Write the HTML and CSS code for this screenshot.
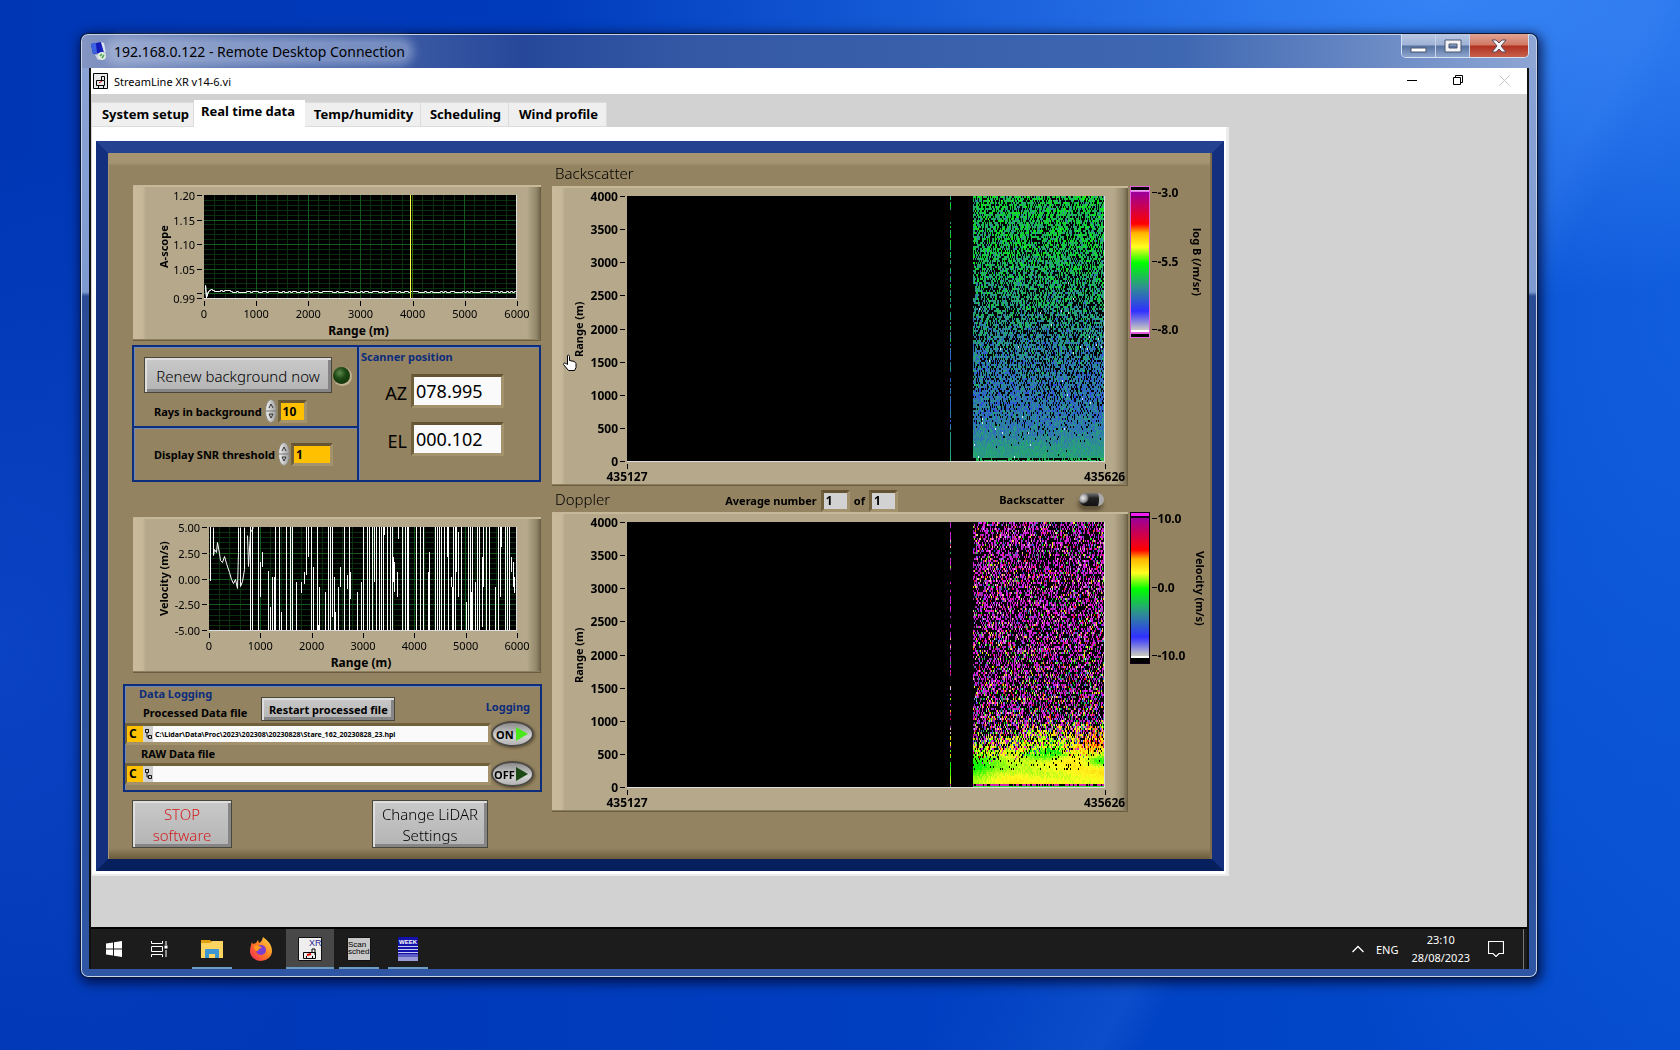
FILE: index.html
```html
<!DOCTYPE html>
<html lang="en">
<head>
<meta charset="UTF-8">
<title>192.168.0.122 - Remote Desktop Connection</title>
<link rel="stylesheet" href="styles.css">
</head>
<body>
<div class="window">
  <div class="titlebar">
    <svg class="rdp-icon" width="18" height="20" viewBox="0 0 18 20">
      <path d="M1 3l10-2 3 10-11 2z" fill="#1018b8"/>
      <path d="M1 3l5-1 1 10-4 1z" fill="#3b62e0"/>
      <path d="M11 1l3 1 2 10-2-1z" fill="#dfe6f2"/>
      <path d="M5 14l9-2 2 4-8 3z" fill="#cfd6e2"/>
      <circle cx="12" cy="15" r="4" fill="#dfeedd"/>
      <path d="M10 15l2-2m0 4l2-3" stroke="#3c9a3c" stroke-width="1.4"/>
    </svg>
    <span class="title">192.168.0.122 - Remote Desktop Connection</span>
    <div class="caption-buttons">
      <button class="min" aria-label="Minimize"><svg width="18" height="6"><rect x="1" y="1" width="15" height="4" fill="#fff" stroke="#4a5470"/></svg></button>
      <button class="max" aria-label="Maximize"><svg width="18" height="14"><path d="M1 1h16v12H1z M5 5v4h8V5z" fill="#f4f4f6" fill-rule="evenodd" stroke="#4a5470"/></svg></button>
      <button class="close" aria-label="Close"><svg width="16" height="14"><path d="M1 1h4l3 3 3-3h4l-5 6 5 6h-4l-3-3-3 3H1l5-6z" fill="#f6f6f8" stroke="#5a4a5c"/></svg></button>
    </div>
  </div>

  <div class="screen">
    <div class="app-title">
      <svg width="15" height="16" viewBox="0 0 15 16"><path d="M.5.5h14v15H.5z" fill="#e8e8e8" stroke="#000"/><path d="M3.500 7.500h8v5h-8zM5.500 12v3M10.500 12v3M8.500 7V3.500h3V7" fill="none" stroke="#000"/><path d="M6 10l3-2" stroke="#c00"/></svg>
      <span>StreamLine XR v14-6.vi</span>
      <div class="app-buttons">
        <button aria-label="Minimize"><svg width="11" height="11"><path d="M0 5.500h10" stroke="#000"/></svg></button>
        <button aria-label="Restore"><svg width="11" height="11"><path d="M.5 2.500h7v7h-7zM2.500 2.500v-2h7v7h-2" fill="none" stroke="#000"/></svg></button>
        <button aria-label="Close" disabled><svg width="11" height="11"><path d="M.5.5l10 10M10.500.5l-10 10" stroke="#c4c4c4"/></svg></button>
      </div>
    </div>

    <div class="client">
      <div class="tabs" role="tablist">
        <button role="tab" class="tab t1">System setup</button>
        <button role="tab" class="tab t2 active">Real time data</button>
        <button role="tab" class="tab t3">Temp/humidity</button>
        <button role="tab" class="tab t4">Scheduling</button>
        <button role="tab" class="tab t5">Wind profile</button>
      </div>

      <div class="page">
        <div class="panel">
          <div class="left">
            <!-- A-scope -->
            <div class="graph small">
              <div class="y-title">A-scope</div>
              <ul class="y-axis ascope-axis"><li>1.20</li><li>1.15</li><li>1.10</li><li>1.05</li><li>0.99</li></ul>
              <canvas id="ascope"></canvas>
              <ul class="x-axis"><li>0</li><li>1000</li><li>2000</li><li>3000</li><li>4000</li><li>5000</li><li>6000</li></ul>
              <div class="x-title">Range (m)</div>
            </div>

            <div class="groups">
              <div class="group renew">
                <div class="row">
                  <button class="btn big">Renew background now</button>
                  <span class="led"></span>
                </div>
                <div class="row num">
                  <label for="rays">Rays in background</label>
                  <svg class="spin" width="12" height="24"><ellipse cx="6" cy="12" rx="5.500" ry="11.500" fill="url(#silver)" stroke="#8b8778"/><path d="M1 12h10" stroke="#777"/><path d="M4 9l2-4 2 4M4 15h4l-2 4z" fill="none" stroke="#333"/></svg>
                  <input id="rays" class="yellow w1" type="text" value="10">
                </div>
              </div>
              <div class="group scanner">
                <div class="group-title">Scanner position</div>
                <div class="pos"><label for="az">AZ</label><input id="az" type="text" value="078.995" readonly></div>
                <div class="pos"><label for="el">EL</label><input id="el" type="text" value="000.102" readonly></div>
              </div>
              <div class="group snr">
                <div class="row num">
                  <label for="snr">Display SNR threshold</label>
                  <svg class="spin" width="12" height="24"><ellipse cx="6" cy="12" rx="5.500" ry="11.500" fill="url(#silver)" stroke="#8b8778"/><path d="M1 12h10" stroke="#777"/><path d="M4 9l2-4 2 4M4 15h4l-2 4z" fill="none" stroke="#333"/></svg>
                  <input id="snr" class="yellow w2" type="text" value="1">
                </div>
              </div>
            </div>

            <!-- velocity -->
            <div class="graph small velocity">
              <div class="y-title">Velocity (m/s)</div>
              <ul class="y-axis"><li>5.00</li><li>2.50</li><li>0.00</li><li>-2.50</li><li>-5.00</li></ul>
              <canvas id="velocity"></canvas>
              <ul class="x-axis"><li>0</li><li>1000</li><li>2000</li><li>3000</li><li>4000</li><li>5000</li><li>6000</li></ul>
              <div class="x-title">Range (m)</div>
            </div>

            <div class="group logging">
              <div class="log-head">
                <div>
                  <div class="group-title">Data Logging</div>
                  <label for="proc">Processed Data file</label>
                </div>
                <button class="btn restart">Restart processed file</button>
                <span class="log-label">Logging</span>
              </div>
              <div class="file-row">
                <div class="path">
                  <span class="drive">C</span>
                  <svg width="10" height="16"><path d="M2.500 3.500h3v3h-3zM5.500 9.500h3v3h-3zM4 6.500V11h1.500" fill="none" stroke="#111"/></svg>
                  <input id="proc" type="text" value="C:\Lidar\Data\Proc\2023\202308\20230828\Stare_162_20230828_23.hpl">
                </div>
                <button class="toggle on">ON</button>
              </div>
              <label class="raw-label" for="raw">RAW Data file</label>
              <div class="file-row">
                <div class="path">
                  <span class="drive">C</span>
                  <svg width="10" height="16"><path d="M2.500 3.500h3v3h-3zM5.500 9.500h3v3h-3zM4 6.500V11h1.500" fill="none" stroke="#111"/></svg>
                  <input id="raw" type="text" value="">
                </div>
                <button class="toggle off">OFF</button>
              </div>
            </div>

            <div class="actions">
              <button class="btn big stop">STOP<br>software</button>
              <button class="btn big change">Change LiDAR<br>Settings</button>
            </div>
          </div>

          <div class="right">
            <div class="map-title top">Backscatter</div>
            <div class="map-row">
              <div class="graph large">
                <div class="y-title">Range (m)</div>
                <ul class="y-axis"><li>4000</li><li>3500</li><li>3000</li><li>2500</li><li>2000</li><li>1500</li><li>1000</li><li>500</li><li>0</li></ul>
                <canvas id="backscatter"></canvas>
                <ul class="x-axis"><li>435127</li><li>435626</li></ul>
              </div>
              <div class="scale pink">
                <div class="ramp"></div>
                <ul><li>-3.0</li><li>-5.5</li><li>-8.0</li></ul>
                <div class="scale-title">log B (/m/sr)</div>
              </div>
            </div>
            <div class="map-title mid">
              <span>Doppler</span>
              <div class="average">
                <label for="avg">Average number</label>
                <input id="avg" type="text" value="1" readonly>
                <label for="avg-of">of</label>
                <input id="avg-of" type="text" value="1" readonly>
              </div>
              <label class="switch-label" for="mode">Backscatter</label>
              <input id="mode" class="switch" type="checkbox">
            </div>
            <div class="map-row">
              <div class="graph large">
                <div class="y-title">Range (m)</div>
                <ul class="y-axis"><li>4000</li><li>3500</li><li>3000</li><li>2500</li><li>2000</li><li>1500</li><li>1000</li><li>500</li><li>0</li></ul>
                <canvas id="doppler"></canvas>
                <ul class="x-axis"><li>435127</li><li>435626</li></ul>
              </div>
              <div class="scale">
                <div class="ramp"></div>
                <ul><li>10.0</li><li>0.0</li><li>-10.0</li></ul>
                <div class="scale-title">Velocity (m/s)</div>
              </div>
            </div>
          </div>

          <svg class="hand" width="16" height="18"><path d="M5.500 1.500c1-1 2 0 2 1v4l5 1 1.500 2v4l-1.500 3h-6l-5-6c0-2 2-1.500 4 0z" fill="#fff" stroke="#000"/></svg>
        </div>
      </div>
    </div>

    <div class="taskbar">
      <button class="task" aria-label="Start"><svg width="16" height="16"><path d="M0 2.500l7-1v6H0zM8 1.300L16 0v7.500H8zM0 8.500h7v6l-7-1zM8 8.500h8V16l-8-1.200z" fill="#fff"/></svg></button>
      <button class="task" aria-label="Task view"><svg width="17" height="16"><path d="M.5 0v2.500h11V0M.5 16v-2.500h11V16M.5 5.500h11v5H.5zM15 0v4M15 9v7" fill="none" stroke="#fff"/><path d="M13.500 4.500h3v3h-3z" fill="#fff"/></svg></button>
      <button class="task run files" aria-label="File Explorer"><svg width="22" height="20"><path d="M0 1h9l2 2v3H0z" fill="#e0a010"/><path d="M0 4h9l2-2h11v17H0z" fill="#fcd462"/><path d="M4 11q0-1 1-1h12q1 0 1 1v8h-4v-4H8v4H4z" fill="#3c96d2"/></svg></button>
      <button class="task" aria-label="Firefox"><svg width="24" height="24"><defs><linearGradient id="fox" x1="1" y1="0" x2="0" y2="1"><stop offset="0" stop-color="#ffe64a"/><stop offset=".5" stop-color="#ff7a22"/><stop offset="1" stop-color="#f0245c"/></linearGradient></defs><path d="M3 5l1 2 3-1 2-3 1 3c2-1 3-2 4-6 4 3 9 7 9 14a11 10 0 0 1-22 0C1 11 2 8 3 5z" fill="url(#fox)"/><circle cx="12" cy="13" r="5" fill="#7a3fd0"/><path d="M5 9c4-1 6 0 8 2-2 0-4 1-4 3-3 0-4-2-4-5z" fill="#ff9a20"/></svg></button>
      <button class="task run current" aria-label="StreamLine XR"><svg width="24" height="24"><path d="M.5.5h23v23H.5z" fill="#eee" stroke="#111"/><text x="11" y="9" class="tile-xr">XR</text><path d="M5.500 15.500h12v6h-12zM8.500 22v-3M14.500 22v-3M14 15v-3h3v6" fill="none" stroke="#000"/><path d="M9 18l4-1" stroke="#d00" stroke-width="2"/></svg></button>
      <button class="task run" aria-label="Scan sched"><svg width="24" height="24"><path d="M.5.5h23v23H.5z" fill="#c8c8c8" stroke="#111"/><text x="1" y="10" class="tile-text">Scan</text><text x="1" y="17" class="tile-text">sched</text></svg></button>
      <button class="task run" aria-label="Week"><svg width="20" height="24"><path d="M0 0h20v24H0z" fill="#1212a8"/><text x="1" y="7" class="tile-week">WEEK</text><path d="M0 9.500h20M0 12.500h20M0 15.500h20" stroke="#c8ccf0"/><path d="M0 17h20v3H0z" fill="#5d5dc4"/><path d="M0 20h20v4H0z" fill="#9a9ad8"/></svg></button>
      <div class="tray">
        <svg class="chevron" width="12" height="8"><path d="M.5 7L6 1.500 11.500 7" fill="none" stroke="#fff" stroke-width="1.300"/></svg>
        <span class="lang">ENG</span>
        <div class="clock">23:10<br>28/08/2023</div>
        <svg width="16" height="16"><path d="M.5.5h15v12H11L8 15.500 5 12.500H.5z" fill="none" stroke="#fff" stroke-width="1.200"/></svg>
      </div>
    </div>
  </div>
</div>

<svg width="0" height="0" class="defs"><defs><linearGradient id="silver"><stop offset="0" stop-color="#f4f4f4"/><stop offset="1" stop-color="#9a9a9a"/></linearGradient></defs></svg>
<script src="plots.js"></script>
</body>
</html>
```

FILE: styles.css
```css
* {
  box-sizing: border-box;
}
body {
  margin: 0;
  min-height: 100vh;
  display: flex;
  padding: 34px 143px 73px 81px;
  font-family: "Noto Sans", "Open Sans", sans-serif;
  font-size: 11px;
  color: #000;
  background:
    linear-gradient(118deg, transparent 66%, rgba(90, 160, 255, 0.12) 74%, transparent 76%),
    radial-gradient(ellipse 900px 300px at 86% 0, #3583f5, transparent),
    radial-gradient(ellipse 500px 900px at 100% 30%, rgba(20, 98, 226, 0.8), transparent),
    radial-gradient(ellipse 400px 500px at 0 62%, rgba(20, 80, 210, 0.5), transparent),
    linear-gradient(90deg, #0036b4, #0040c2 60%, #044cce);
}
button, input {
  font: inherit;
  color: inherit;
  margin: 0;
  padding: 0;
  border: 0;
}
ul {
  list-style: none;
  margin: 0;
  padding: 0;
}
svg {
  display: block;
  flex: none;
}
canvas {
  display: block;
  width: 100%;
  height: 100%;
}
.defs {
  position: absolute;
}

/* remote desktop window */
.window {
  flex: 1;
  min-width: 0;
  display: flex;
  flex-direction: column;
  padding: 0 8px 8px;
  border-radius: 7px;
  background:
    linear-gradient(90deg, #8495c2 0, #5872b0 160px, #27489a 440px, #3458a4 600px, #3f68b2 1100px, #8ea6d4 100%) top / 100% 34px no-repeat,
    linear-gradient(#8ca4d6 0, #7d9ad0 258px, #2a4c94 262px, #2f56a4 100%);
  box-shadow: inset 0 0 0 1px #c4d2ea, 0 0 0 1px #0a1838, 2px 3px 12px 3px rgba(0, 0, 30, 0.7);
}
.titlebar {
  height: 34px;
  display: flex;
  align-items: center;
  padding-left: 1px;
}
.title {
  font-size: 14px;
  margin: 0 auto 0 2px;
  padding: 0 4px;
  border-radius: 10px;
  background: rgba(200, 212, 236, 0.4);
  box-shadow: 0 0 8px 5px rgba(200, 212, 236, 0.4);
}
.caption-buttons {
  align-self: flex-start;
  display: flex;
  height: 24px;
  border: 1px solid #d5e0f2;
  border-top: 0;
  border-radius: 0 0 5px 5px;
  overflow: hidden;
}
.caption-buttons button {
  display: flex;
  align-items: center;
  justify-content: center;
  width: 34px;
  background: linear-gradient(#b9c8e2, #9fb2d6 48%, #56729f 52%, #8ea6cf);
  border-right: 1px solid #c6d2e8;
}
.caption-buttons .min {
  padding-top: 8px;
}
.caption-buttons .close {
  width: 58px;
  background: linear-gradient(#e0a394, #d07763 48%, #b03020 52%, #c8604c);
  border-right: 0;
}

.screen {
  flex: 1;
  display: flex;
  flex-direction: column;
  background: #0b0b0b;
  border: 0 solid #111;
  border-width: 0 2px;
}
.app-title {
  height: 26px;
  display: flex;
  align-items: center;
  background: #fff;
  padding-left: 2px;
}
.app-title span {
  margin: 0 auto 0 6px;
}
.app-buttons {
  display: flex;
  gap: 35px;
  padding: 0 17px 2px 0;
}
.app-buttons button {
  background: none;
}

.client {
  flex: 1;
  padding: 6px 0 0 1px;
  background: #d2d2d2;
}
.tabs {
  display: flex;
  align-items: flex-end;
  height: 27px;
}
.tab {
  height: 25px;
  padding: 0 0 2px 2px;
  background: #efefef;
  border: 1px solid #dcdcdc;
  border-left: 0;
  font-size: 13px;
  font-weight: bold;
  line-height: 18px;
  white-space: nowrap;
}
.tab.active {
  height: 27px;
  background: #fff;
  border-color: #fff;
  padding: 0 2px 5px 0;
}
.t1 { width: 102px; padding-left: 6px; }
.t2 { width: 111px; }
.t3 { width: 116px; }
.t4 { width: 88px; }
.t5 { width: 98px; }

.page {
  width: 79.2%;
  min-width: 1100px;
  padding: 14px 2px 3px 4px;
  background: #fff;
  border: 0 solid #ececec;
  border-width: 0 3px 2px 0;
}
.panel {
  position: relative;
  display: flex;
  gap: 9px;
  padding: 0 0 0 15px;
  border: 12px solid;
  border-color: #24428f #142f7e #05205c #142f7e;
  background:
    linear-gradient(#a89672, #a59370 10px, #938361 13px) top / 100% 13px no-repeat,
    linear-gradient(#938361, #6c5c3c) bottom / 100% 11px no-repeat,
    #938361;
  box-shadow: inset 1px 0 #a49674, inset -2px 0 #7b6c4c;
}
.hand {
  position: absolute;
  left: 454px;
  top: 201px;
}

.left {
  flex: none;
  width: 420px;
  padding: 32px 2px 11px 10px;
}

/* graphs */
.graph {
  display: grid;
  background:
    linear-gradient(90deg, #c9bb9c, #c5b798 10px, transparent 13px),
    linear-gradient(270deg, #6a6048, #94896c 5px, transparent 14px),
    #b5a88b;
  box-shadow: inset 0 2px #c6b999, inset -1px -1px #6b5d40, inset 0 -2px #8c7f60;
}
.graph canvas {
  grid-area: plot;
  border-right: 1px solid #ddd;
  border-bottom: 1px solid #ddd;
  min-width: 0;
  background: #000;
}
.y-title {
  grid-area: ytitle;
  writing-mode: vertical-rl;
  transform: rotate(180deg);
  text-align: center;
  font-weight: bold;
  line-height: 18px;
  white-space: nowrap;
}
.y-axis {
  grid-area: yaxis;
  display: flex;
  flex-direction: column;
  justify-content: space-between;
  margin: -7px 0 -8px;
  text-align: right;
}
.y-axis li {
  position: relative;
  height: 16px;
  line-height: 16px;
  padding-right: 9px;
}
.y-axis li::after, .ascope-axis li:last-child::before {
  content: "";
  position: absolute;
  right: 2px;
  top: 7px;
  width: 5px;
  height: 1px;
  background: #000;
}
.ascope-axis li:last-child {
  margin-top: 5px;
}
.ascope-axis li:last-child::before {
  top: 2px;
}
.x-axis {
  grid-area: xaxis;
  display: flex;
  justify-content: space-between;
  margin: 0 -24px;
}
.x-axis li {
  position: relative;
  width: 48px;
  padding-top: 7px;
  line-height: 16px;
  text-align: center;
}
.x-axis li::before {
  content: "";
  position: absolute;
  left: 24px;
  top: 2px;
  width: 1px;
  height: 5px;
  background: #000;
}
.x-title {
  grid-area: xtitle;
  text-align: center;
  font-weight: bold;
  line-height: 16px;
  padding-right: 4px;
}
.graph.small {
  height: 156px;
  padding: 10px 24px 0 22px;
  grid-template: "ytitle yaxis plot" 104px "blank blank xaxis" 24px ". . xtitle" 16px / 18px 31px 1fr;
}
.graph.velocity {
  grid-template-columns: 18px 36px 1fr;
}
.small .x-title {
  font-size: 12px;
}
.graph.large {
  flex: 1;
  min-width: 0;
  height: 300px;
  padding: 10px 23px 0 18px;
  font-size: 12px;
  font-weight: bold;
  grid-template: "ytitle yaxis plot" 266px ". . xaxis" 24px / 18px 39px 1fr;
}
.large .y-title {
  font-size: 11px;
}

/* control groups */
.groups {
  display: grid;
  grid-template: 83px 54px / 227px 1fr;
  margin: 4px 0 35px -1px;
}
.group {
  border: 2px solid #0c2c7c;
  box-shadow: inset 1px 1px #7088bb;
}
.scanner {
  grid-row: span 2;
  border-left: 0;
}
.snr {
  border-top: 0;
  padding: 14px 0 0 20px;
}
.renew {
  padding: 10px 0 0 10px;
}
.row {
  display: flex;
  align-items: center;
}
.btn {
  border: 1px solid #4b463a;
  background: linear-gradient(#c9c9c9, #b4b4b4);
  box-shadow: inset 2px 2px #dedede, inset -3px -3px #858585;
}
.big {
  font-size: 15px;
  font-weight: 300;
}
.renew .btn {
  width: 188px;
  height: 36px;
  padding-top: 2px;
  white-space: nowrap;
}
.led {
  width: 17px;
  height: 17px;
  margin-left: 1px;
  border-radius: 50%;
  background: radial-gradient(circle at 40% 35%, #5d8a4c, #1c4714 40%, #0c2a06);
  box-shadow: 1px 1px 1px 1px #c3b493;
}
.num {
  font-weight: bold;
}
.renew .num {
  margin: 6px 0 0 10px;
}
.spin {
  margin: 0 1px 0 3px;
}
.yellow, .pos input, .average input {
  border: 3px solid;
  border-color: #655431 #a3926c #a3926c #70603c;
}
.yellow {
  height: 23px;
  padding-left: 2px;
  background: #ffc000;
  font-size: 12px;
  font-weight: bold;
}
.w1 { width: 29px; }
.w2 { width: 42px; }
.group-title, .log-label {
  color: #0c2c7c;
  font-weight: bold;
  line-height: 16px;
}
.group-title {
  padding: 2px 0 0 2px;
}
.pos {
  display: flex;
  align-items: center;
  justify-content: flex-end;
  gap: 4px;
  height: 34px;
  margin: 9px 35px 14px 0;
  font-size: 18px;
}
.pos label {
  padding-top: 4px;
}
.pos input {
  width: 93px;
  height: 34px;
  padding-left: 2px;
  background: #fafafa;
}

/* data logging */
.logging {
  height: 108px;
  margin: 11px 0 8px -10px;
  width: 419px;
}
.log-head {
  display: flex;
  height: 37px;
}
.log-head .group-title {
  padding: 1px 0 0 14px;
  line-height: 14px;
}
.log-head label {
  display: block;
  padding: 3px 0 0 18px;
  line-height: 18px;
  font-weight: bold;
}
.restart {
  width: 134px;
  height: 24px;
  margin: 11px 0 0 14px;
  font-weight: bold;
  white-space: nowrap;
}
.log-label {
  margin: 13px 10px 0 auto;
}
.file-row {
  display: flex;
  align-items: center;
  height: 22px;
  padding-right: 6px;
}
.path {
  flex: 1;
  display: flex;
  height: 22px;
  border: 3px solid;
  border-color: #70603c #a3926c #a3926c #70603c;
  border-left-width: 2px;
}
.drive {
  width: 16px;
  padding-left: 2px;
  background: #ffc000;
  font-size: 12px;
  font-weight: bold;
  line-height: 16px;
}
.path svg {
  background: #d0d0d0;
}
.path input {
  flex: 1;
  min-width: 0;
  padding: 0 2px;
  background: #fafafa;
  font-size: 7px;
  font-weight: bold;
}
.raw-label {
  display: block;
  padding: 0 0 1px 16px;
  line-height: 17px;
  font-weight: bold;
}
.toggle {
  display: flex;
  align-items: center;
  gap: 2px;
  width: 43px;
  height: 26px;
  padding-left: 3px;
  border: 2px solid #4d4a44;
  border-radius: 50%;
  background: linear-gradient(#8b8b8b, #d2d2d2 60%, #b2b2b2);
  box-shadow: 1px 1px 3px #5b4d30;
  font-weight: bold;
}
.toggle::after {
  content: "";
  flex: none;
  border-left: 12px solid #4be81e;
  border-top: 7px solid transparent;
  border-bottom: 7px solid transparent;
}
.toggle.off {
  padding-left: 1px;
  gap: 1px;
}
.toggle.off::after {
  border-left-color: #1c4a14;
}
.actions {
  display: flex;
  justify-content: space-between;
  padding: 0 53px 0 0;
  margin-left: -1px;
}
.actions .btn {
  height: 48px;
  padding-top: 2px;
  line-height: 21px;
}
.stop {
  width: 100px;
  color: #d02020;
}
.change {
  width: 116px;
}

/* time-height maps */
.right {
  flex: 1;
  min-width: 0;
}
.map-title {
  display: flex;
  align-items: center;
  padding-left: 3px;
  font-size: 15px;
  font-weight: 300;
}
.map-title.top {
  height: 33px;
  padding-top: 7px;
}
.map-title.mid {
  height: 26px;
  padding-right: 108px;
}
.average {
  display: flex;
  align-items: center;
  gap: 4px;
  margin-left: 115px;
  padding-top: 3px;
  font-size: 11px;
  font-weight: bold;
}
.average input {
  width: 29px;
  height: 22px;
  padding-left: 2px;
  background: #d2d2d2;
  font-size: 12px;
}
.switch-label {
  margin-left: auto;
  font-size: 11px;
  font-weight: bold;
}
.switch {
  appearance: none;
  width: 25px;
  height: 13px;
  margin-left: 14px;
  border-radius: 7px;
  background: radial-gradient(circle at 4px 5px, #eee, #999 4px, transparent 6px), linear-gradient(#777, #222 40%, #111);
  border-right: 5px solid #a9a9a9;
  box-shadow: -1px 5px 4px #5e5238;
}
.map-row {
  display: flex;
}
.scale {
  display: grid;
  grid-template-columns: 20px 40px 22px;
  width: 84px;
  padding-left: 2px;
  height: 150px;
}
.ramp {
  border: 1px solid #100018;
  background:
    linear-gradient(#f020f0 3px, #100018 3px, #100018 5px, transparent 5px),
    linear-gradient(0deg, #000 5px, #fff 5px, #fff 7px, transparent 7px),
    linear-gradient(#9b009b 5px, #ff0000 37px, #ffb400 46px, #ffff20 60px, #00ff00 76px, #2e9090 100px, #3030ff 124px, #c4c4c4 142px);
}
.pink .ramp {
  border-color: #e060e0;
  background:
    linear-gradient(#000 3px, #f0c0f0 3px, #e060e0 5px, transparent 5px),
    linear-gradient(0deg, #000 3px, #e060e0 3px, #e060e0 5px, #fff 5px, #fff 7px, transparent 7px),
    linear-gradient(#9b009b 5px, #ff0000 37px, #ffb400 46px, #ffff20 60px, #00ff00 76px, #2e9090 100px, #3030ff 124px, #c4c4c4 142px);
}
.scale ul {
  display: flex;
  flex-direction: column;
  justify-content: space-between;
  height: 153px;
  margin-top: -1px;
  font-weight: bold;
  font-size: 12px;
}
.scale li {
  line-height: 16px;
  white-space: nowrap;
}
.scale li::before {
  content: "";
  display: inline-block;
  width: 5px;
  height: 1px;
  margin: 0 1px 4px 2px;
  background: #000;
}
.scale-title {
  writing-mode: vertical-rl;
  justify-self: center;
  align-self: center;
  font-weight: bold;
  white-space: nowrap;
}
.pink .scale-title {
  justify-self: start;
}

/* taskbar */
.taskbar {
  display: flex;
  height: 42px;
  background: #1c1c1c;
  border-top: 2px solid #000;
  color: #fff;
}
.task {
  display: flex;
  align-items: center;
  justify-content: center;
  width: 48px;
  margin-right: 1px;
  background: none;
}
.task:nth-child(-n+2) {
  width: 45px;
}
.files {
  margin-left: 5px;
}
.task.run {
  background: linear-gradient(#6c9cc0, #6c9cc0) bottom / 40px 2px no-repeat;
}
.task.current {
  background: linear-gradient(0deg, #6c9cc0 2px, #484848 2px);
}
.tile-xr {
  font: 9px "Liberation Sans", sans-serif;
  fill: #2a2a90;
}
.tile-text {
  font: 8px "Liberation Sans", sans-serif;
}
.tile-week {
  font: bold 6px "Liberation Sans", sans-serif;
  fill: #fff;
}
.tray {
  display: flex;
  align-items: center;
  margin: 0 3px 0 auto;
  padding-right: 19px;
  border-right: 1px solid #777;
}
.lang {
  margin: 0 13px 0 12px;
}
.clock {
  margin-right: 18px;
  line-height: 18px;
  text-align: center;
}
```

FILE: plots.js
```js
// colour ramp shared by both maps, 0 = top of the scale
const ramp = [
  [0, 155, 0, 155], [0.23, 255, 0, 0], [0.29, 255, 180, 0], [0.4, 255, 255, 32],
  [0.52, 0, 245, 0], [0.69, 46, 144, 144], [0.86, 48, 48, 255], [1, 215, 215, 230]
];

function lerp(stops, t) {
  t = Math.max(0, Math.min(1, t));
  let i = 1;
  while (stops[i][0] < t) i++;
  const a = stops[i - 1], b = stops[i];
  const k = (t - a[0]) / (b[0] - a[0]);
  return a.slice(1).map((v, n) => v + (b[n + 1] - v) * k);
}

function color(t) {
  return `rgb(${lerp(ramp, t).map(Math.round)})`;
}

let seed = 7;
function rnd() {
  seed = (seed * 1664525 + 1013904223) % 4294967296;
  return seed / 4294967296;
}

function setup(id) {
  const canvas = document.getElementById(id);
  canvas.width = canvas.clientWidth;
  canvas.height = canvas.clientHeight;
  return [canvas.getContext('2d'), canvas.width, canvas.height];
}

function grid(ctx, w, h, dx, dy, every) {
  for (let pass = 0; pass < 2; pass++) {
    ctx.fillStyle = pass ? '#145a1c' : '#0b3010';
    for (let i = 1; i * dx < w; i++) {
      if ((i % 5 === 0) === !!pass) ctx.fillRect(Math.round(i * dx), 0, 1, h);
    }
    for (let i = 1; i * dy < h; i++) {
      if ((i % every === 0) === !!pass) ctx.fillRect(0, Math.round(i * dy), w, 1);
    }
  }
}

function line(ctx, points) {
  ctx.strokeStyle = '#fff';
  ctx.lineWidth = 1;
  ctx.beginPath();
  points.forEach(p => ctx.lineTo(p[0] + 0.5, p[1] + 0.5));
  ctx.stroke();
}

function drawAscope() {
  const [ctx, w, h] = setup('ascope');
  grid(ctx, w, h, w / 30, h / 21, 5);
  const points = [[1, 90], [2, 102], [4, 96], [7, 94]];
  for (let x = 9; x < w; x += 2) {
    points.push([x, (x < 28 ? 95 : 96) + Math.round(rnd() * 2 - 0.5)]);
  }
  line(ctx, points);
  line(ctx, points);
  ctx.fillStyle = '#3c6a00';
  ctx.fillRect(Math.round(w * 4000 / 6000), 0, 1, h);
  ctx.fillStyle = '#ffff50';
  ctx.fillRect(Math.round(w * 3960 / 6000), 0, 1, h);
}

function drawVelocity() {
  const [ctx, w, h] = setup('velocity');
  grid(ctx, w, h, w / 30, h / 20, 5);
  line(ctx, [[4, 0], [4, 28], [5, 22], [7, 25], [8, 15], [10, 26], [11, 33], [13, 35], [15, 29], [17, 36],
    [20, 45], [22, 52], [24, 56], [26, 52], [28, 61], [29, 25], [29, 0]]);
  line(ctx, [[31, 0], [31, 59], [33, 54], [35, 42], [35, 0]]);
  line(ctx, [[38, 8], [39, 39], [41, 5], [44, 0]]);
  const full = [41, 43, 49, 66, 70, 77, 81, 83, 102, 108, 121, 135, 140, 154, 158, 160, 163, 167, 170,
    172, 174, 178, 181, 183, 198, 199, 207, 211, 214, 226, 228, 230, 232, 235, 239, 244, 246, 252, 259, 261,
    263, 268, 270, 277, 289, 296, 298, 300];
  // x, top, bottom
  const parts = [[1, 0, 54], [51, 35, 70], [53, 25, 40], [59, 44, 103], [61, 80, 103], [63, 50, 103], [65, 50, 103],
    [72, 85, 103], [87, 55, 103], [92, 55, 66], [95, 45, 57], [97, 0, 48], [99, 0, 30], [104, 40, 103],
    [109, 98, 103], [110, 60, 103], [116, 65, 103], [119, 0, 103], [123, 0, 90], [125, 50, 103], [126, 85, 103],
    [129, 60, 103], [131, 40, 60], [138, 48, 62], [141, 45, 72], [148, 65, 103], [152, 55, 103], [165, 0, 55],
    [175, 0, 8], [184, 30, 55], [185, 35, 65], [188, 45, 70], [189, 0, 12], [193, 0, 103], [196, 0, 103],
    [219, 45, 103], [220, 25, 103], [238, 0, 30], [242, 50, 60], [243, 60, 103], [247, 0, 45], [249, 5, 70],
    [257, 75, 103], [262, 65, 103], [266, 55, 103], [273, 30, 100], [274, 0, 60], [280, 0, 103], [286, 60, 103],
    [291, 0, 70], [292, 0, 20], [302, 30, 45], [304, 35, 60], [305, 50, 66]];
  ctx.fillStyle = '#fff';
  full.forEach(x => ctx.fillRect(x, 0, 1, h));
  parts.forEach(p => ctx.fillRect(p[0], p[1], 1, p[2] - p[1]));
}

function drawMap(id, pixel) {
  const [ctx, w, h] = setup(id);
  const start = Math.round(w * 0.726), strip = Math.round(w * 0.678);
  for (let y = 0; y < h; y += 2) {
    for (let x = start; x < w; x++) {
      const c = pixel(y / h, (x - start) / (w - start));
      if (c) {
        ctx.fillStyle = c;
        ctx.fillRect(x, y, 1, 2);
      }
    }
    const c = pixel(y / h, 0);
    if (c) {
      ctx.fillStyle = c;
      ctx.fillRect(strip, y, 1, 2);
    }
  }
}

// height from top, mean colour, spread, share of gaps
const profile = [
  [0, 0.61, 0.13, 0.3], [0.2, 0.62, 0.13, 0.38], [0.4, 0.66, 0.12, 0.44], [0.55, 0.71, 0.12, 0.38],
  [0.75, 0.74, 0.11, 0.24], [0.87, 0.73, 0.09, 0.08], [0.94, 0.68, 0.05, 0.01], [1, 0.66, 0.03, 0]
];

function backscatter(y) {
  if (y > 0.993) return rnd() < 0.8 ? '#20b850' : null;
  if (y > 0.985) return rnd() < 0.3 ? '#20b850' : null;
  const [mean, spread, gaps] = lerp(profile, y);
  if (rnd() < gaps) return null;
  if (y > 0.3 && rnd() < 0.004) return '#d8e8ff';
  return color(mean + (rnd() + rnd() - 1) * spread);
}

function doppler(y, x) {
  if (y > 0.993) return '#30e030';
  if (y > 0.985) return rnd() < 0.6 ? '#d020b0' : null;
  // aerosol layer near the ground
  const top = 0.87 - x * 0.04 + Math.sin(x * 9) * 0.012;
  const solid = Math.max(0, Math.min(1, (y - top + 0.1) / 0.14));
  if (rnd() < solid) {
    if (rnd() < 0.06 && y < 0.93) return null;
    let v = 0.4 + Math.sin(x * 5 - y * 50 + 2) * 0.03 - (x - 0.4) * 0.05;
    v -= 0.12 * Math.exp(-((x - 0.88) ** 2) / 0.02 - ((y - 0.84) ** 2) / 0.001);
    v += 0.1 * Math.exp(-(x ** 2) / 0.03 - ((y - 0.93) ** 2) / 0.002);
    v += 0.14 * Math.exp(-((x - 0.55) ** 2) / 0.03 - ((y - 0.87) ** 2) / 0.0008);
    v += 0.14 * Math.exp(-((x - 0.98) ** 2) / 0.02 - ((y - 0.9) ** 2) / 0.0006);
    return color(v + (rnd() - 0.5) * (y < 0.88 ? 0.16 : 0.04));
  }
  if (rnd() < (y > 0.7 ? 0.45 : 0.52)) return null;
  const k = rnd();
  if (k < 0.7 - Math.max(0, y - 0.4) * 0.6) return rnd() < 0.6 ? '#e020e0' : '#a828b8';
  if (k > 0.94) return '#f0c0a0';
  return color(rnd());
}

drawAscope();
drawVelocity();
drawMap('backscatter', backscatter);
drawMap('doppler', doppler);
```
